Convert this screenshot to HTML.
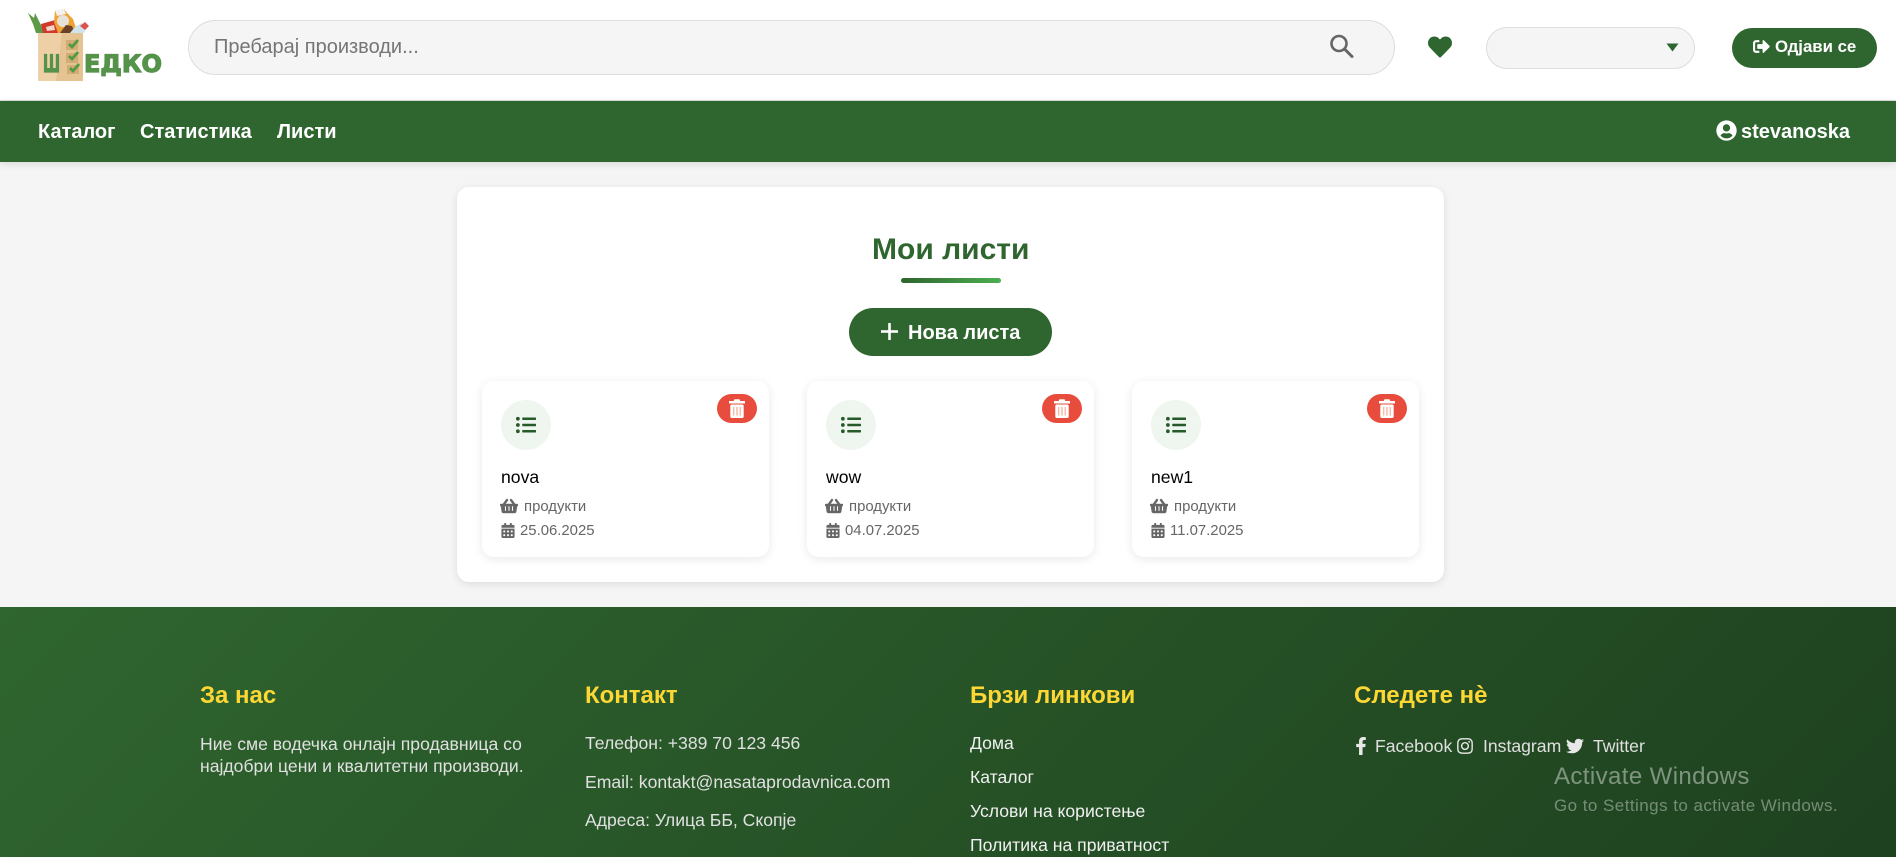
<!DOCTYPE html>
<html lang="mk"><head><meta charset="utf-8"><title>Мои листи</title>
<style>
*{box-sizing:border-box;margin:0;padding:0}
html,body{width:1896px;height:857px;overflow:hidden;background:#f5f5f5;font-family:"Liberation Sans",Arial,sans-serif}
.a,.t{position:absolute}
.t{white-space:nowrap}
svg{display:block;position:absolute;fill:currentColor}
header{position:absolute;left:0;top:0;width:1896px;height:101px;background:#fff;border-bottom:1px solid #e0e0e0}
nav{position:absolute;left:0;top:101px;width:1896px;height:61px;background:#2f652f;box-shadow:0 2px 8px rgba(0,0,0,.12)}
.nl{color:#fff;font-weight:700;font-size:20px;line-height:24px;top:120px}
main{position:absolute;left:457px;top:187px;width:987px;height:395px;background:#fff;border-radius:12px;box-shadow:0 2px 8px rgba(0,0,0,.1)}
.card{position:absolute;top:381px;width:287px;height:176px;background:#fff;border-radius:12px;box-shadow:0 2px 10px rgba(0,0,0,.09)}
.del{position:absolute;left:235px;top:13px;width:40px;height:29px;border-radius:15px;background:#e74c3c;color:#fff}
.ic{position:absolute;left:19px;top:19px;width:50px;height:50px;border-radius:50%;background:#eef6ef;color:#265a28}
.nm{left:19px;top:85px;font-size:17.6px;line-height:22px;color:#000}
.m{font-size:14.9px;line-height:18px;color:#666}
.bk{stroke:#666;stroke-width:14}
footer{position:absolute;left:0;top:607px;width:1896px;height:250px;background:linear-gradient(135deg,#2f652f 0%,#1e411f 100%)}
.h{color:#fdd835;font-weight:700;font-size:24px;line-height:28px;top:682px}
.f{color:#e0e0e0;font-size:17.6px;line-height:22px}
.l{color:#f0f0f0}
</style></head><body>
<header></header>
<svg style="left:0;top:0" width="190" height="100" viewBox="0 0 190 100">
<path d="M28 13l6 5 1-5 4 8 3 6 2 6-8 0-3-9z" fill="#5c9a48"/>
<path d="M41 24l14-4 3 13-15 0z" fill="#cf3a2c"/>
<path d="M46 27l8-2 1 5-8 1z" fill="#f2d8c8"/>
<path d="M55 11l9-2 3 4 6 6 3 9-3 5H58l-4-11z" fill="#f0a234"/>
<circle cx="63" cy="21" r="6" fill="#e7e2d8"/>
<path d="M55 10l9-1 2 5-9 2z" fill="#f2f2f0"/>
<path d="M60 33l6-8 6 1 3 7z" fill="#6a4228"/>
<path d="M70 33l5-6 7-4 5 4-3 6z" fill="#cfe3ea"/>
<path d="M80 26l5-4 4 4-4 4z" fill="#d9534f"/>
<rect x="38" y="33" width="45" height="48" fill="#e6c392"/>
<path d="M38 33h24l-6 48H38z" fill="#eed0a6"/>
<rect x="66" y="40" width="12" height="10" fill="#d2ac74"/>
<rect x="66" y="53" width="12" height="10" fill="#d2ac74"/>
<rect x="67" y="65" width="12" height="9" fill="#d2ac74"/>
<path d="M69 44l3 3 6-7M69 56l3 3 6-7M70 68l3 3 6-7" fill="none" stroke="#4f9a44" stroke-width="2.800"/>
<text x="43" y="72" font-family="'DejaVu Sans',sans-serif" font-weight="700" font-size="24" fill="#55924a" stroke="#55924a" stroke-width="1.200" textLength="17" lengthAdjust="spacingAndGlyphs">Ш</text>
<text x="84" y="72" font-family="'DejaVu Sans',sans-serif" font-weight="700" font-size="24" fill="#55924a" stroke="#55924a" stroke-width="1.200" textLength="78" lengthAdjust="spacingAndGlyphs">ЕДКО</text>
</svg>
<div class="a" style="left:188px;top:20px;width:1207px;height:55px;border-radius:28px;background:#f5f5f5;border:1px solid #ddd"></div>
<div class="t" style="left:214px;top:35px;font-size:20px;line-height:24px;color:#757575">Пребарај производи...</div>
<svg style="left:1328px;top:33px;fill:none;stroke:#666" width="28" height="28" viewBox="0 0 28 28"><circle cx="11" cy="10.500" r="7.500" stroke-width="2.600"/><path d="M17 16.500L24 23.500" stroke-width="3" stroke-linecap="round"/></svg>
<svg style="left:1428px;top:35px;color:#2f652f" width="24" height="24" viewBox="0 0 512 512"><path d="M462.3 62.6C407.5 15.9 326 24.3 275.7 76.2L256 96.5l-19.7-20.3C186.1 24.3 104.5 15.9 49.7 62.6c-62.8 53.6-66.1 149.8-9.9 207.9l193.5 199.8c12.5 12.9 32.8 12.9 45.3 0l193.5-199.8c56.3-58.1 53-154.3-9.8-207.9z"/></svg>
<div class="a" style="left:1486px;top:27px;width:209px;height:42px;border-radius:21px;background:#f5f5f5;border:1px solid #ddd"></div>
<svg style="left:1666px;top:43px;color:#2f652f" width="13" height="9" viewBox="0 0 13 9"><path d="M0.5 0.5h12L6.5 8.5z"/></svg>
<div class="a" style="left:1732px;top:28px;width:145px;height:40px;border-radius:20px;background:#2f652f"></div>
<svg style="left:1753px;top:38px;color:#fff" width="17" height="17" viewBox="0 0 512 512"><path d="M497 273L329 441c-15 15-41 4.500-41-17v-96H152c-13.300 0-24-10.700-24-24v-96c0-13.300 10.700-24 24-24h136V88c0-21.400 25.900-32 41-17l168 168c9.300 9.400 9.300 24.600 0 34zM192 436v-40c0-6.600-5.400-12-12-12H96c-17.700 0-32-14.300-32-32V160c0-17.700 14.300-32 32-32h84c6.600 0 12-5.400 12-12V76c0-6.600-5.400-12-12-12H96c-53 0-96 43-96 96v192c0 53 43 96 96 96h84c6.600 0 12-5.400 12-12z"/></svg>
<div class="t" style="left:1775px;top:37px;font-size:16.800px;font-weight:700;line-height:20px;color:#fff">Одјави се</div>
<nav></nav>
<div class="t nl" style="left:38px">Каталог</div>
<div class="t nl" style="left:140px">Статистика</div>
<div class="t nl" style="left:277px">Листи</div>
<svg style="left:1716px;top:120px;color:#fff" width="21" height="21" viewBox="0 0 496 512"><path d="M248 8C111 8 0 119 0 256s111 248 248 248 248-111 248-248S385 8 248 8zm0 96c48.600 0 88 39.400 88 88s-39.400 88-88 88-88-39.400-88-88 39.400-88 88-88zm0 344c-58.700 0-111.300-26.600-146.500-68.200 18.800-35.400 55.600-59.800 98.500-59.800 2.400 0 4.800.4 7.100 1.100 13 4.200 26.600 6.900 40.900 6.900 14.300 0 28-2.700 40.900-6.900 2.300-.7 4.700-1.100 7.100-1.100 42.900 0 79.700 24.400 98.500 59.800C359.300 421.400 306.700 448 248 448z"/></svg>
<div class="t nl" style="left:1741px">stevanoska</div>
<main></main>
<div class="t" style="left:872px;top:231px;font-size:30px;font-weight:700;line-height:38px;color:#2f652f">Мои листи</div>
<div class="a" style="left:901px;top:278px;width:100px;height:5px;border-radius:3px;background:linear-gradient(90deg,#2f652f,#4caf50)"></div>
<div class="a" style="left:849px;top:308px;width:203px;height:48px;border-radius:24px;background:#2f652f"></div>
<svg style="left:881px;top:323px;color:#fff" width="17" height="17" viewBox="0 0 17 17"><rect x="7.200" y="0" width="2.600" height="17"/><rect x="0" y="7.200" width="17" height="2.600"/></svg>
<div class="t" style="left:908px;top:321px;font-size:20px;font-weight:700;line-height:24px;color:#fff">Нова листа</div>

<div class="card" style="left:482px">
<div class="del"><svg style="left:12px;top:5px" width="16" height="19" viewBox="0 0 16 19"><path d="M5.500 0.300h5l.8 1.700H16v2.500H0V2h4.700z"/><rect x="1.300" y="5.500" width="13.400" height="13.500" rx="1.500"/><path d="M4.200 8h1.100v8.500H4.200zM7.400 8h1.200v8.500H7.400zM10.700 8h1.100v8.500h-1.100z" fill="#f3a88f"/></svg></div>
<div class="ic"><svg style="left:15px;top:15px" width="20" height="20" viewBox="0 0 512 512"><path d="M48 48a48 48 0 1 0 48 48 48 48 0 0 0-48-48zm0 160a48 48 0 1 0 48 48 48 48 0 0 0-48-48zm0 160a48 48 0 1 0 48 48 48 48 0 0 0-48-48zm448 16H176a16 16 0 0 0-16 16v32a16 16 0 0 0 16 16h320a16 16 0 0 0 16-16v-32a16 16 0 0 0-16-16zm0-320H176a16 16 0 0 0-16 16v32a16 16 0 0 0 16 16h320a16 16 0 0 0 16-16V80a16 16 0 0 0-16-16zm0 160H176a16 16 0 0 0-16 16v32a16 16 0 0 0 16 16h320a16 16 0 0 0 16-16v-32a16 16 0 0 0-16-16z"/></svg></div>
<div class="t nm">nova</div>
<svg class="bk" style="left:18px;top:117px;color:#666" width="18" height="16" viewBox="0 0 576 512"><path d="M576 216v16c0 13.255-10.745 24-24 24h-8l-26.113 182.788C514.509 462.435 494.257 480 470.370 480H105.630c-23.887 0-44.139-17.565-47.518-41.212L32 256h-8c-13.255 0-24-10.745-24-24v-16c0-13.255 10.745-24 24-24h67.341l106.780-146.821c10.395-14.292 30.407-17.453 44.701-7.058 14.293 10.395 17.453 30.408 7.058 44.701L170.477 192h235.046L326.120 82.821c-10.395-14.292-7.234-34.306 7.059-44.701 14.291-10.395 34.306-7.235 44.701 7.058L484.659 192H552c13.255 0 24 10.745 24 24zM312 392V280c0-13.255-10.745-24-24-24s-24 10.745-24 24v112c0 13.255 10.745 24 24 24s24-10.745 24-24zm112 0V280c0-13.255-10.745-24-24-24s-24 10.745-24 24v112c0 13.255 10.745 24 24 24s24-10.745 24-24zm-224 0V280c0-13.255-10.745-24-24-24s-24 10.745-24 24v112c0 13.255 10.745 24 24 24s24-10.745 24-24z"/></svg>
<div class="t m" style="left:42px;top:117px">продукти</div>
<svg style="left:19px;top:142px;color:#666" width="14" height="15" viewBox="0 0 448 512"><path d="M0 464c0 26.500 21.500 48 48 48h352c26.500 0 48-21.500 48-48V192H0v272zm320-196c0-6.600 5.400-12 12-12h40c6.600 0 12 5.400 12 12v40c0 6.600-5.400 12-12 12h-40c-6.600 0-12-5.400-12-12v-40zm0 128c0-6.600 5.400-12 12-12h40c6.600 0 12 5.400 12 12v40c0 6.600-5.400 12-12 12h-40c-6.600 0-12-5.400-12-12v-40zM192 268c0-6.600 5.400-12 12-12h40c6.600 0 12 5.400 12 12v40c0 6.600-5.400 12-12 12h-40c-6.600 0-12-5.400-12-12v-40zm0 128c0-6.600 5.400-12 12-12h40c6.600 0 12 5.400 12 12v40c0 6.600-5.400 12-12 12h-40c-6.600 0-12-5.400-12-12v-40zM64 268c0-6.600 5.400-12 12-12h40c6.600 0 12 5.400 12 12v40c0 6.600-5.400 12-12 12H76c-6.600 0-12-5.400-12-12v-40zm0 128c0-6.600 5.400-12 12-12h40c6.600 0 12 5.400 12 12v40c0 6.600-5.400 12-12 12H76c-6.600 0-12-5.400-12-12v-40zM400 64h-48V16c0-8.800-7.200-16-16-16h-32c-8.800 0-16 7.200-16 16v48H160V16c0-8.800-7.200-16-16-16h-32c-8.800 0-16 7.200-16 16v48H48C21.500 64 0 85.500 0 112v48h448v-48c0-26.500-21.500-48-48-48z"/></svg>
<div class="t m" style="left:38px;top:141px">25.06.2025</div>
</div>

<div class="card" style="left:807px">
<div class="del"><svg style="left:12px;top:5px" width="16" height="19" viewBox="0 0 16 19"><path d="M5.500 0.300h5l.8 1.700H16v2.500H0V2h4.700z"/><rect x="1.300" y="5.500" width="13.400" height="13.500" rx="1.500"/><path d="M4.200 8h1.100v8.500H4.200zM7.400 8h1.200v8.500H7.400zM10.700 8h1.100v8.500h-1.100z" fill="#f3a88f"/></svg></div>
<div class="ic"><svg style="left:15px;top:15px" width="20" height="20" viewBox="0 0 512 512"><path d="M48 48a48 48 0 1 0 48 48 48 48 0 0 0-48-48zm0 160a48 48 0 1 0 48 48 48 48 0 0 0-48-48zm0 160a48 48 0 1 0 48 48 48 48 0 0 0-48-48zm448 16H176a16 16 0 0 0-16 16v32a16 16 0 0 0 16 16h320a16 16 0 0 0 16-16v-32a16 16 0 0 0-16-16zm0-320H176a16 16 0 0 0-16 16v32a16 16 0 0 0 16 16h320a16 16 0 0 0 16-16V80a16 16 0 0 0-16-16zm0 160H176a16 16 0 0 0-16 16v32a16 16 0 0 0 16 16h320a16 16 0 0 0 16-16v-32a16 16 0 0 0-16-16z"/></svg></div>
<div class="t nm">wow</div>
<svg class="bk" style="left:18px;top:117px;color:#666" width="18" height="16" viewBox="0 0 576 512"><path d="M576 216v16c0 13.255-10.745 24-24 24h-8l-26.113 182.788C514.509 462.435 494.257 480 470.370 480H105.630c-23.887 0-44.139-17.565-47.518-41.212L32 256h-8c-13.255 0-24-10.745-24-24v-16c0-13.255 10.745-24 24-24h67.341l106.780-146.821c10.395-14.292 30.407-17.453 44.701-7.058 14.293 10.395 17.453 30.408 7.058 44.701L170.477 192h235.046L326.120 82.821c-10.395-14.292-7.234-34.306 7.059-44.701 14.291-10.395 34.306-7.235 44.701 7.058L484.659 192H552c13.255 0 24 10.745 24 24zM312 392V280c0-13.255-10.745-24-24-24s-24 10.745-24 24v112c0 13.255 10.745 24 24 24s24-10.745 24-24zm112 0V280c0-13.255-10.745-24-24-24s-24 10.745-24 24v112c0 13.255 10.745 24 24 24s24-10.745 24-24zm-224 0V280c0-13.255-10.745-24-24-24s-24 10.745-24 24v112c0 13.255 10.745 24 24 24s24-10.745 24-24z"/></svg>
<div class="t m" style="left:42px;top:117px">продукти</div>
<svg style="left:19px;top:142px;color:#666" width="14" height="15" viewBox="0 0 448 512"><path d="M0 464c0 26.500 21.500 48 48 48h352c26.500 0 48-21.500 48-48V192H0v272zm320-196c0-6.600 5.400-12 12-12h40c6.600 0 12 5.400 12 12v40c0 6.600-5.400 12-12 12h-40c-6.600 0-12-5.400-12-12v-40zm0 128c0-6.600 5.400-12 12-12h40c6.600 0 12 5.400 12 12v40c0 6.600-5.400 12-12 12h-40c-6.600 0-12-5.400-12-12v-40zM192 268c0-6.600 5.400-12 12-12h40c6.600 0 12 5.400 12 12v40c0 6.600-5.400 12-12 12h-40c-6.600 0-12-5.400-12-12v-40zm0 128c0-6.600 5.400-12 12-12h40c6.600 0 12 5.400 12 12v40c0 6.600-5.400 12-12 12h-40c-6.600 0-12-5.400-12-12v-40zM64 268c0-6.600 5.400-12 12-12h40c6.600 0 12 5.400 12 12v40c0 6.600-5.400 12-12 12H76c-6.600 0-12-5.400-12-12v-40zm0 128c0-6.600 5.400-12 12-12h40c6.600 0 12 5.400 12 12v40c0 6.600-5.400 12-12 12H76c-6.600 0-12-5.400-12-12v-40zM400 64h-48V16c0-8.800-7.200-16-16-16h-32c-8.800 0-16 7.200-16 16v48H160V16c0-8.800-7.200-16-16-16h-32c-8.800 0-16 7.200-16 16v48H48C21.500 64 0 85.500 0 112v48h448v-48c0-26.500-21.500-48-48-48z"/></svg>
<div class="t m" style="left:38px;top:141px">04.07.2025</div>
</div>

<div class="card" style="left:1132px">
<div class="del"><svg style="left:12px;top:5px" width="16" height="19" viewBox="0 0 16 19"><path d="M5.500 0.300h5l.8 1.700H16v2.500H0V2h4.700z"/><rect x="1.300" y="5.500" width="13.400" height="13.500" rx="1.500"/><path d="M4.200 8h1.100v8.500H4.200zM7.400 8h1.200v8.500H7.400zM10.700 8h1.100v8.500h-1.100z" fill="#f3a88f"/></svg></div>
<div class="ic"><svg style="left:15px;top:15px" width="20" height="20" viewBox="0 0 512 512"><path d="M48 48a48 48 0 1 0 48 48 48 48 0 0 0-48-48zm0 160a48 48 0 1 0 48 48 48 48 0 0 0-48-48zm0 160a48 48 0 1 0 48 48 48 48 0 0 0-48-48zm448 16H176a16 16 0 0 0-16 16v32a16 16 0 0 0 16 16h320a16 16 0 0 0 16-16v-32a16 16 0 0 0-16-16zm0-320H176a16 16 0 0 0-16 16v32a16 16 0 0 0 16 16h320a16 16 0 0 0 16-16V80a16 16 0 0 0-16-16zm0 160H176a16 16 0 0 0-16 16v32a16 16 0 0 0 16 16h320a16 16 0 0 0 16-16v-32a16 16 0 0 0-16-16z"/></svg></div>
<div class="t nm">new1</div>
<svg class="bk" style="left:18px;top:117px;color:#666" width="18" height="16" viewBox="0 0 576 512"><path d="M576 216v16c0 13.255-10.745 24-24 24h-8l-26.113 182.788C514.509 462.435 494.257 480 470.370 480H105.630c-23.887 0-44.139-17.565-47.518-41.212L32 256h-8c-13.255 0-24-10.745-24-24v-16c0-13.255 10.745-24 24-24h67.341l106.780-146.821c10.395-14.292 30.407-17.453 44.701-7.058 14.293 10.395 17.453 30.408 7.058 44.701L170.477 192h235.046L326.120 82.821c-10.395-14.292-7.234-34.306 7.059-44.701 14.291-10.395 34.306-7.235 44.701 7.058L484.659 192H552c13.255 0 24 10.745 24 24zM312 392V280c0-13.255-10.745-24-24-24s-24 10.745-24 24v112c0 13.255 10.745 24 24 24s24-10.745 24-24zm112 0V280c0-13.255-10.745-24-24-24s-24 10.745-24 24v112c0 13.255 10.745 24 24 24s24-10.745 24-24zm-224 0V280c0-13.255-10.745-24-24-24s-24 10.745-24 24v112c0 13.255 10.745 24 24 24s24-10.745 24-24z"/></svg>
<div class="t m" style="left:42px;top:117px">продукти</div>
<svg style="left:19px;top:142px;color:#666" width="14" height="15" viewBox="0 0 448 512"><path d="M0 464c0 26.500 21.500 48 48 48h352c26.500 0 48-21.500 48-48V192H0v272zm320-196c0-6.600 5.400-12 12-12h40c6.600 0 12 5.400 12 12v40c0 6.600-5.400 12-12 12h-40c-6.600 0-12-5.400-12-12v-40zm0 128c0-6.600 5.400-12 12-12h40c6.600 0 12 5.400 12 12v40c0 6.600-5.400 12-12 12h-40c-6.600 0-12-5.400-12-12v-40zM192 268c0-6.600 5.400-12 12-12h40c6.600 0 12 5.400 12 12v40c0 6.600-5.400 12-12 12h-40c-6.600 0-12-5.400-12-12v-40zm0 128c0-6.600 5.400-12 12-12h40c6.600 0 12 5.400 12 12v40c0 6.600-5.400 12-12 12h-40c-6.600 0-12-5.400-12-12v-40zM64 268c0-6.600 5.400-12 12-12h40c6.600 0 12 5.400 12 12v40c0 6.600-5.400 12-12 12H76c-6.600 0-12-5.400-12-12v-40zm0 128c0-6.600 5.400-12 12-12h40c6.600 0 12 5.400 12 12v40c0 6.600-5.400 12-12 12H76c-6.600 0-12-5.400-12-12v-40zM400 64h-48V16c0-8.800-7.200-16-16-16h-32c-8.800 0-16 7.200-16 16v48H160V16c0-8.800-7.200-16-16-16h-32c-8.800 0-16 7.200-16 16v48H48C21.500 64 0 85.500 0 112v48h448v-48c0-26.500-21.500-48-48-48z"/></svg>
<div class="t m" style="left:38px;top:141px">11.07.2025</div>
</div>

<footer></footer>
<div class="t h" style="left:200px">За нас</div>
<div class="t h" style="left:585px">Контакт</div>
<div class="t h" style="left:970px">Брзи линкови</div>
<div class="t h" style="left:1354px">Следете нѐ</div>
<div class="t f" style="left:200px;top:733px">Ние сме водечка онлајн продавница со</div>
<div class="t f" style="left:200px;top:755px">најдобри цени и квалитетни производи.</div>
<div class="t f" style="left:585px;top:732px">Телефон: +389 70 123 456</div>
<div class="t f" style="left:585px;top:771px">Email: kontakt@nasataprodavnica.com</div>
<div class="t f" style="left:585px;top:809px">Адреса: Улица ББ, Скопје</div>
<div class="t f l" style="left:970px;top:732px">Дома</div>
<div class="t f l" style="left:970px;top:766px">Каталог</div>
<div class="t f l" style="left:970px;top:800px">Услови на користење</div>
<div class="t f l" style="left:970px;top:834px">Политика на приватност</div>
<svg style="left:1352px;top:737px;color:#e8e8e8" width="18" height="18" viewBox="0 0 320 512"><path d="M279.140 288l14.220-92.660h-88.910v-60.130c0-25.350 12.420-50.060 52.240-50.060h40.420V6.260S260.430 0 225.360 0c-73.220 0-121.080 44.380-121.080 124.720v70.620H22.890V288h81.390v224h100.170V288z"/></svg>
<div class="t f" style="left:1375px;top:735px">Facebook</div>
<svg style="left:1457px;top:737px;color:#e8e8e8" width="16" height="18" viewBox="0 0 448 512"><path d="M224.100 141c-63.600 0-114.900 51.300-114.900 114.900s51.300 114.900 114.900 114.900S339 319.500 339 255.900 287.700 141 224.100 141zm0 189.600c-41.100 0-74.700-33.500-74.700-74.700s33.500-74.700 74.700-74.700 74.700 33.500 74.700 74.700-33.600 74.700-74.700 74.700zm146.400-194.300c0 14.900-12 26.800-26.800 26.800-14.900 0-26.800-12-26.800-26.800s12-26.800 26.800-26.800 26.800 12 26.800 26.800zm76.100 27.200c-1.700-35.900-9.900-67.700-36.200-93.900-26.200-26.200-58-34.400-93.900-36.200-37-2.100-147.900-2.100-184.900 0-35.800 1.700-67.600 9.900-93.900 36.100s-34.400 58-36.200 93.900c-2.100 37-2.100 147.900 0 184.900 1.700 35.900 9.900 67.700 36.200 93.900s58 34.400 93.900 36.200c37 2.100 147.900 2.100 184.900 0 35.900-1.700 67.700-9.900 93.900-36.200 26.200-26.200 34.400-58 36.200-93.900 2.100-37 2.100-147.800 0-184.800zM398.800 388c-7.800 19.600-22.900 34.700-42.600 42.600-29.500 11.700-99.500 9-132.100 9s-102.700 2.600-132.100-9c-19.600-7.800-34.700-22.900-42.600-42.600-11.700-29.500-9-99.500-9-132.100s-2.600-102.700 9-132.100c7.800-19.600 22.900-34.700 42.600-42.600 29.500-11.700 99.500-9 132.100-9s102.700-2.600 132.100 9c19.600 7.800 34.700 22.900 42.600 42.600 11.700 29.500 9 99.500 9 132.100s2.700 102.700-9 132.100z"/></svg>
<div class="t f" style="left:1483px;top:735px">Instagram</div>
<svg style="left:1566px;top:737px;color:#e8e8e8" width="18" height="18" viewBox="0 0 512 512"><path d="M459.370 151.716c.325 4.548.325 9.097.325 13.645 0 138.720-105.583 298.558-298.558 298.558-59.452 0-114.680-17.219-161.137-47.106 8.447.974 16.568 1.299 25.340 1.299 49.055 0 94.213-16.568 130.274-44.832-46.132-.975-84.792-31.188-98.112-72.772 6.498.974 12.995 1.624 19.818 1.624 9.421 0 18.843-1.300 27.614-3.573-48.081-9.747-84.143-51.980-84.143-102.985v-1.299c13.969 7.797 30.214 12.670 47.431 13.319-28.264-18.843-46.781-51.005-46.781-87.391 0-19.492 5.197-37.360 14.294-52.954 51.655 63.675 129.300 105.258 216.365 109.807-1.624-7.797-2.599-15.918-2.599-24.040 0-57.828 46.782-104.934 104.934-104.934 30.213 0 57.502 12.670 76.670 33.137 23.715-4.548 46.456-13.320 66.599-25.340-7.798 24.366-24.366 44.833-46.132 57.827 21.117-2.273 41.584-8.122 60.426-16.243-14.292 20.791-32.161 39.308-52.628 54.253z"/></svg>
<div class="t f" style="left:1593px;top:735px">Twitter</div>
<div class="t" style="left:1554px;top:763px;font-size:24px;line-height:28px;letter-spacing:.4px;color:rgba(255,255,255,.42)">Activate Windows</div>
<div class="t" style="left:1554px;top:796px;font-size:17px;line-height:20px;letter-spacing:.45px;color:rgba(255,255,255,.38)">Go to Settings to activate Windows.</div>
</body></html>
